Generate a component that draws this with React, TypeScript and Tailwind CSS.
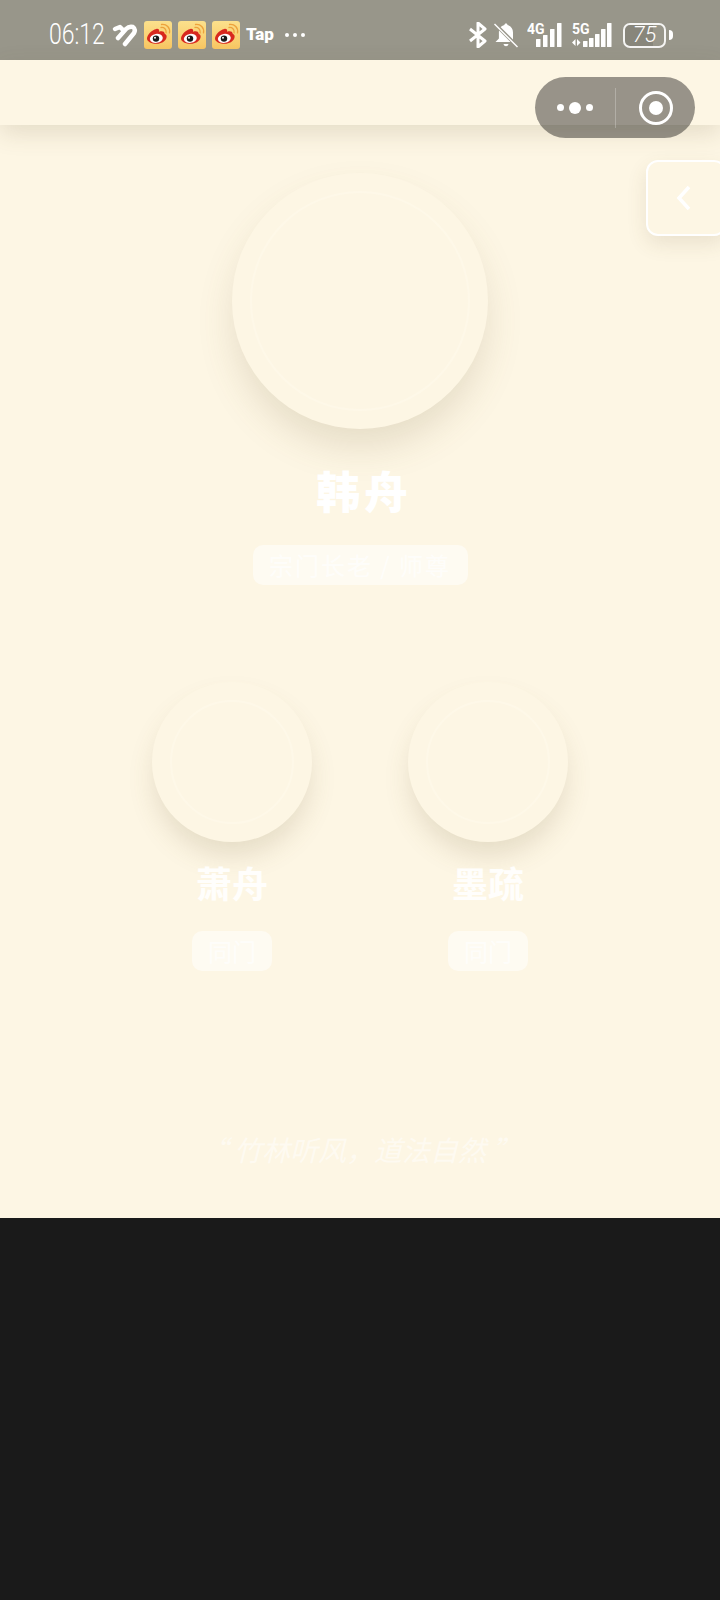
import React from "react";

const cjk = '"Noto Sans CJK SC", sans-serif';

function Weibo() {
  return (
    <svg width="28" height="28" viewBox="0 0 28 28" className="shrink-0">
      <defs>
        <linearGradient id="wbg" x1="0" y1="0" x2="0" y2="1">
          <stop offset="0" stopColor="#fbe08c" />
          <stop offset="1" stopColor="#f8c662" />
        </linearGradient>
      </defs>
      <rect width="28" height="28" rx="3" fill="url(#wbg)" />
      <path d="M3 17.500c0-3.800 4.600-8.600 9.300-9.600 2.200-.4 3.400.9 2.700 2.900 3.200-1 5.400-.3 5.600 1.600.1.500.6.600 1.200 1 1 .8 1 2.200.6 3.600-1 3.400-5.100 5.800-9.700 5.800-5 0-9.700-2-9.700-5.300z" fill="#d8281e" />
      <ellipse cx="12.300" cy="17.400" rx="6.500" ry="4.500" fill="#fff" transform="rotate(-8 12.300 17.400)" />
      <circle cx="12" cy="17.600" r="3.200" fill="#1a1a1a" />
      <circle cx="11" cy="16.800" r="1" fill="#fff" />
      <path d="M17 6.500c3.200-.5 5.700 2 5.100 5.300" fill="none" stroke="#eda23c" strokeWidth="1.300" strokeLinecap="round" />
      <path d="M17.500 3.500c5-.7 9 3.200 8 8.400" fill="none" stroke="#eda23c" strokeWidth="1.300" strokeLinecap="round" />
    </svg>
  );
}

function Signal({ label, five }: { label: string; five?: boolean }) {
  const bars = five
    ? [[11, 6], [17, 9], [23, 13], [29, 18], [35, 24]]
    : [[9, 8], [16, 12], [23, 18], [30, 24]];
  return (
    <svg width={five ? 40 : 36} height="26" viewBox={five ? "0 0 40 26" : "0 0 36 26"} className="shrink-0">
      <text x="0" y="12" fontSize="14" fontWeight="700" fill="#fff" fontFamily="Roboto, sans-serif">{label}</text>
      {five && <path d="M0 20.500l3.500-3.500v7zM5 17l3.500 3.500L5 24z" fill="#fff" />}
      {bars.map(([x, h]) => (
        <rect key={x} x={x} y={25 - h} width="4.500" height={h} rx="0.500" fill="#fff" />
      ))}
    </svg>
  );
}

function Person({ name, tag }: { name: string; tag: string }) {
  return (
    <div className="flex w-[160px] flex-col items-center">
      <div className="flex h-[160px] w-[160px] items-center justify-center rounded-full bg-[#fdf6e4] shadow-[0_16px_26px_-2px_rgba(120,100,60,0.17)]">
        <div className="h-[124px] w-[124px] rounded-full border-2 border-[#fef8e8]" />
      </div>
      <div className="mt-[17px] text-[36px] font-bold leading-[46px] text-white/90" style={{ fontFamily: cjk }}>{name}</div>
      <div className="mt-[26px] flex h-[40px] w-[80px] items-center justify-center rounded-[10px] bg-white/50 text-[24px] text-white/70" style={{ fontFamily: cjk }}>{tag}</div>
    </div>
  );
}

export default function App() {
  return (
    <div className="relative flex h-[1600px] w-[720px] flex-col overflow-hidden bg-[#1a1a1a]">
      <div className="relative flex h-[1218px] flex-col bg-[#fdf6e4]">
        {/* status bar */}
        <div className="flex h-[60px] shrink-0 items-center justify-between bg-[#98968a] pl-[49px] pr-[47px] pt-[10px] text-white">
          <div className="flex items-center">
            <span className="w-[57px] scale-y-[1.28] text-[23px] font-light" style={{ fontFamily: "Roboto, sans-serif" }}>06:12</span>
            <svg width="26" height="24" viewBox="0 0 26 24" className="ml-[6px] shrink-0">
              <g fill="none" stroke="#fff" strokeWidth="4.500" strokeLinecap="round" strokeLinejoin="round">
                <path d="M3 6l5-2 3 3" />
                <path d="M6 15l8-9q3-3 7-2 3 2 1 6L13 21" />
              </g>
            </svg>
            <div className="ml-[6px] flex items-center gap-[6px]">
              <Weibo />
              <Weibo />
              <Weibo />
            </div>
            <span className="ml-[6px] text-[17px] font-black" style={{ fontFamily: "Roboto, sans-serif" }}>Tap</span>
            <div className="ml-[11px] flex gap-[3.5px]">
              <i className="h-[4.5px] w-[4.5px] rounded-full bg-white" />
              <i className="h-[4.5px] w-[4.5px] rounded-full bg-white" />
              <i className="h-[4.5px] w-[4.5px] rounded-full bg-white" />
            </div>
          </div>
          <div className="flex items-center">
            <svg width="20" height="26" viewBox="0 0 20 26" className="shrink-0">
              <path d="M2 7l15 12-7 6V1l7 6L2 19" fill="none" stroke="#fff" strokeWidth="3" strokeLinejoin="round" />
            </svg>
            <svg width="26" height="26" viewBox="0 0 26 26" className="ml-[5px] shrink-0">
              <path d="M13 1.500c-1 0-1.600.7-1.600 1.600-3.600.8-5.500 3.700-5.500 7.400v6L2.500 20h17L19 19 6.500 6.600 20 19v-8.500c0-3.700-2-6.600-5.500-7.400 0-.9-.6-1.600-1.500-1.600z" fill="#fff" />
              <path d="M10.500 22h5c-.3 1.300-1.300 2.300-2.500 2.300s-2.200-1-2.500-2.300z" fill="#fff" />
              <path d="M2 2l22 22" stroke="#98968a" strokeWidth="3.500" />
              <path d="M1.500 2l23 23" stroke="#fff" strokeWidth="1.500" />
            </svg>
            <div className="ml-[8px] flex items-center gap-[9px]">
              <Signal label="4G" />
              <Signal label="5G" five />
            </div>
            <div className="relative ml-[11px] h-[25px] w-[43px] overflow-hidden rounded-[7px] border-2 border-white/90">
              <div className="h-full w-[72%] bg-black/10" />
              <span className="absolute inset-0 flex items-center justify-center text-[22px] font-light italic leading-none" style={{ fontFamily: "Roboto, sans-serif" }}>75</span>
            </div>
            <div className="ml-[3px] h-[10px] w-[4px] rounded-r-sm bg-white" />
          </div>
        </div>

        {/* header */}
        <div className="h-[65px] shrink-0 bg-[#fdf6e4] shadow-[0_8px_24px_rgba(100,85,50,0.16)]" />

        {/* main */}
        <div className="flex flex-1 flex-col items-center pt-[48px]">
          <div className="flex h-[256px] w-[256px] items-center justify-center rounded-full bg-[#fdf6e4] shadow-[0_20px_36px_-2px_rgba(120,100,60,0.17)]">
            <div className="h-[220px] w-[220px] rounded-full border-2 border-[#fef8e8]" />
          </div>
          <div className="ml-[8px] mt-[31px] text-[44px] font-black leading-[60px] tracking-[4px] text-white" style={{ fontFamily: cjk }}>韩舟</div>
          <div className="mt-[25px] flex h-[40px] w-[215px] items-center justify-center rounded-[10px] bg-white/50 text-[24px] tracking-[2px] text-white/70" style={{ fontFamily: cjk }}>宗门长老 / 师尊</div>

          <div className="mt-[97px] flex gap-[96px]">
            <Person name="萧舟" tag="同门" />
            <Person name="墨疏" tag="同门" />
          </div>

          <div className="mt-[158px] text-[28px] italic leading-[40px] text-white/50" style={{ fontFamily: cjk }}>“ 竹林听风，道法自然 ”</div>
        </div>

        {/* capsule */}
        <div className="absolute left-[535px] top-[77px] flex h-[61px] w-[160px] items-center rounded-full bg-black/40">
          <div className="flex w-[80px] items-center justify-center gap-[5px]">
            <i className="h-[7px] w-[7px] rounded-full bg-white" />
            <i className="h-[12px] w-[12px] rounded-full bg-white" />
            <i className="h-[7px] w-[7px] rounded-full bg-white" />
          </div>
          <div className="h-[40px] w-px bg-white/25" />
          <div className="flex flex-1 items-center justify-center">
            <div className="flex h-[34px] w-[34px] items-center justify-center rounded-full border-[3px] border-white">
              <i className="h-[14px] w-[14px] rounded-full bg-white" />
            </div>
          </div>
        </div>

        {/* side tab */}
        <div className="absolute left-[646px] top-[160px] flex h-[76px] w-[80px] items-center rounded-[12px] border-2 border-white bg-[#fdf6e4] pl-[27px] shadow-[0_8px_20px_rgba(100,85,50,0.12)]">
          <svg width="18" height="26" viewBox="0 0 18 26">
            <path d="M14 2L4 13l10 11" fill="none" stroke="#fff" strokeWidth="3.500" />
          </svg>
        </div>
      </div>
    </div>
  );
}
